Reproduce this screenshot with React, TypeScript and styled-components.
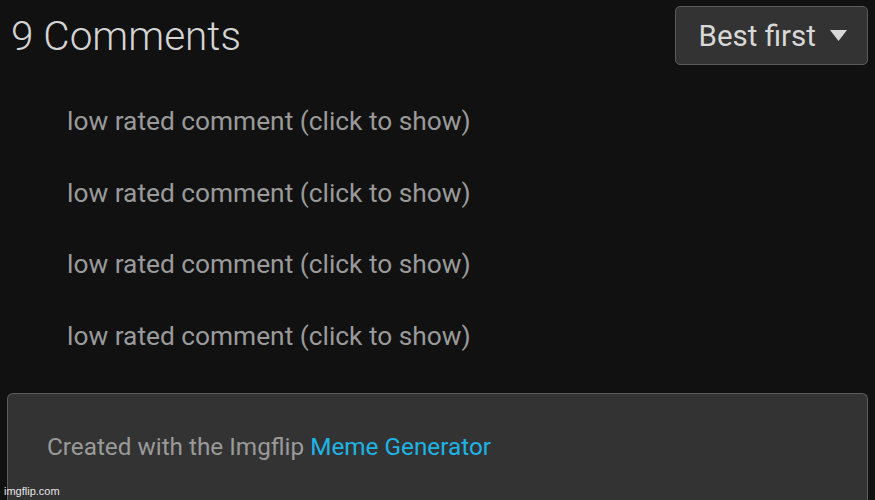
import React from "react";
import styled, { createGlobalStyle } from "styled-components";

const GlobalStyle = createGlobalStyle`
  html, body {
    margin: 0;
    padding: 0;
    background: #111111;
  }
  body {
    font-family: Roboto, "Liberation Sans", Arial, sans-serif;
  }
`;

const comments = [1, 2, 3, 4];

export default function App() {
  return (
    <SPage>
      <GlobalStyle />
      <Header>
        <Title>9 Comments</Title>
        <SortButton>
          Best first
          <Caret viewBox="0 0 17 11">
            <path d="M0 0 L17 0 L8.5 11 Z" fill="#d8d8d8" />
          </Caret>
        </SortButton>
      </Header>
      <CommentList>
        {comments.map((c) => (
          <HiddenComment key={c}>low rated comment (click to show)</HiddenComment>
        ))}
      </CommentList>
      <Footer>
        <FooterText>
          Created with the Imgflip <FooterLink>Meme Generator</FooterLink>
        </FooterText>
        <Watermark>imgflip.com</Watermark>
      </Footer>
    </SPage>
  );
}

const SPage = styled.div`
  width: 875px;
  height: 500px;
  overflow: hidden;
  background: #111111;
  display: flex;
  flex-direction: column;
`;

const Header = styled.div`
  display: flex;
  justify-content: space-between;
  align-items: flex-start;
  padding: 6px 7px 0 11px;
`;

const Title = styled.h1`
  margin: 10px 0 0;
  font-size: 40.5px;
  font-weight: 300;
  color: #d4d4d4;
  line-height: 1;
`;

const SortButton = styled.div`
  display: flex;
  align-items: center;
  gap: 14px;
  height: 59px;
  box-sizing: border-box;
  padding: 0 20px 0 23px;
  background: #333333;
  border: 1.5px solid #5a5a5a;
  border-radius: 5px;
  color: #d8d8d8;
  font-size: 29.5px;
  cursor: pointer;
`;

const Caret = styled.svg`
  width: 17px;
  height: 11px;
`;

const CommentList = styled.div`
  display: flex;
  flex-direction: column;
  padding: 40px 0 0 67px;
`;

const HiddenComment = styled.div`
  height: 71.5px;
  line-height: 32px;
  font-size: 26.3px;
  color: #9a9a9a;
  cursor: pointer;
`;

const Footer = styled.div`
  position: relative;
  margin: auto 7px 0 7px;
  height: 107px;
  box-sizing: border-box;
  background: #333333;
  border: 1.5px solid #5c5c5c;
  border-bottom: none;
  border-radius: 6px 6px 0 0;
  display: flex;
  align-items: center;
  padding: 0 0 2px 39px;
`;

const FooterText = styled.div`
  font-size: 24.3px;
  color: #9a9a9a;
`;

const FooterLink = styled.span`
  color: #1eb4e6;
`;

const Watermark = styled.span`
  position: absolute;
  left: -4px;
  bottom: 3px;
  font-size: 11px;
  color: #e6e6e6;
  font-family: "Liberation Sans", Arial, sans-serif;
`;
